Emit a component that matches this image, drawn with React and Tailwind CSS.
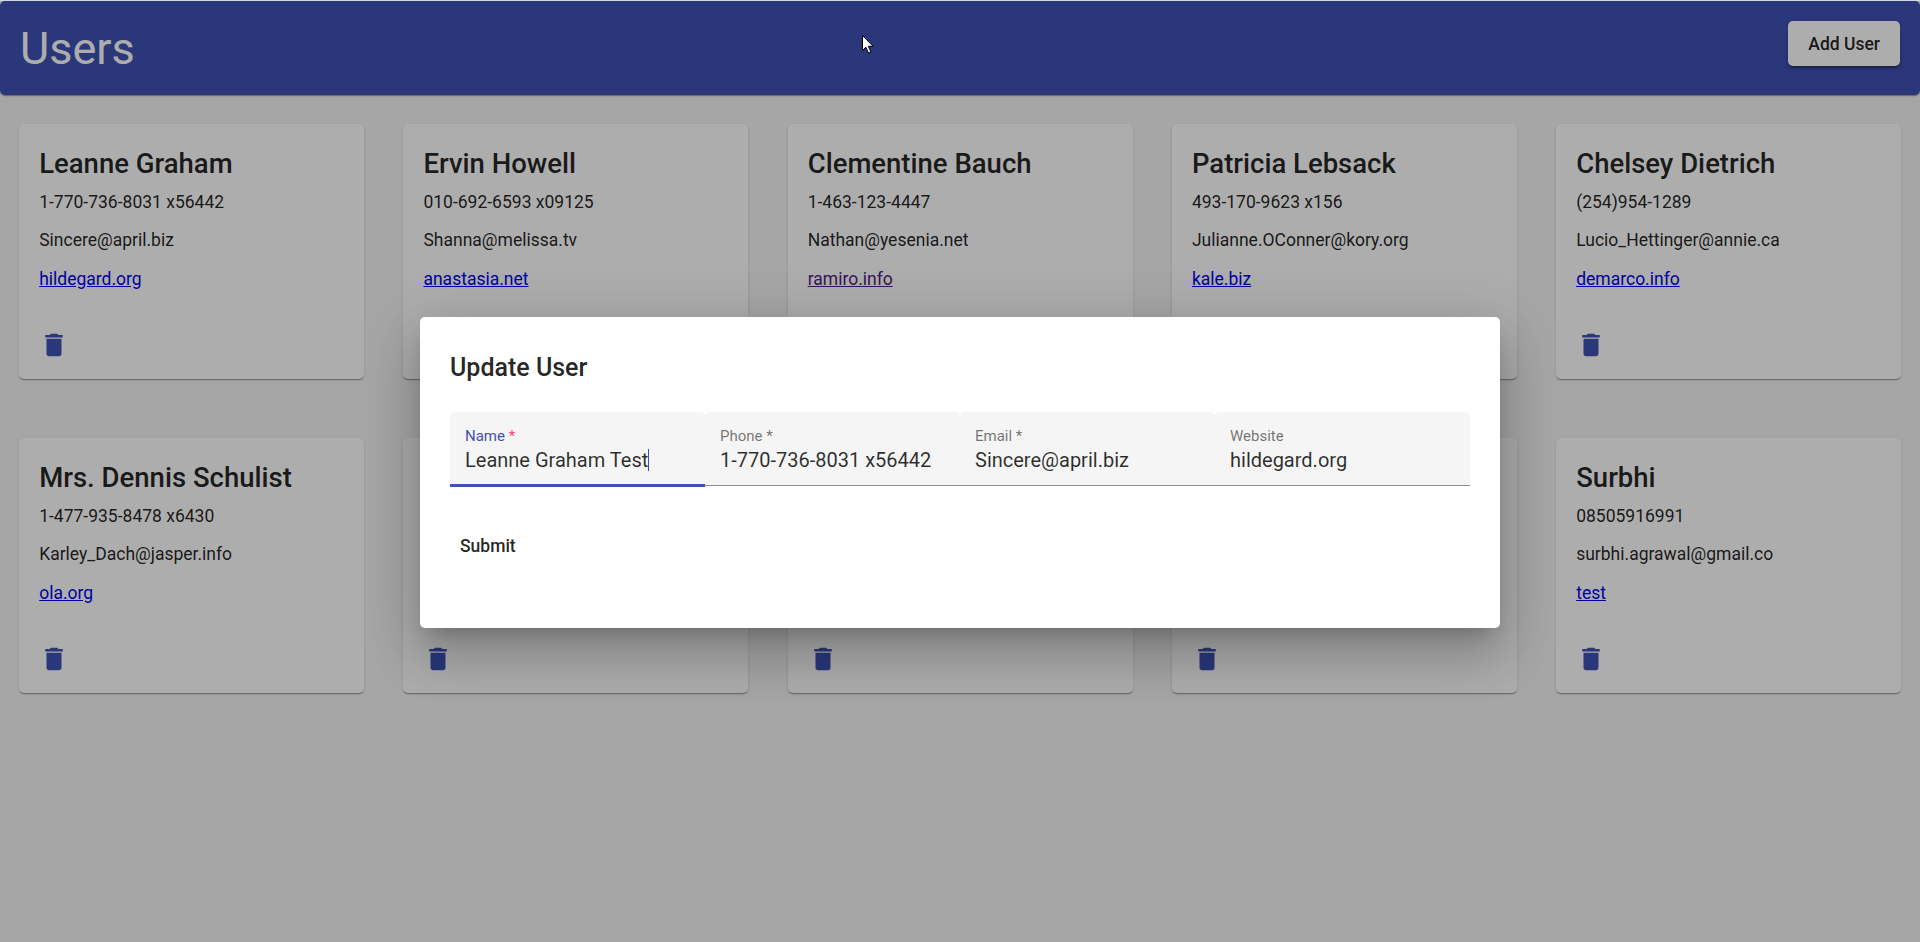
const users = [
  { name: "Leanne Graham", phone: "1-770-736-8031 x56442", email: "Sincere@april.biz", website: "hildegard.org" },
  { name: "Ervin Howell", phone: "010-692-6593 x09125", email: "Shanna@melissa.tv", website: "anastasia.net" },
  { name: "Clementine Bauch", phone: "1-463-123-4447", email: "Nathan@yesenia.net", website: "ramiro.info", visited: true },
  { name: "Patricia Lebsack", phone: "493-170-9623 x156", email: "Julianne.OConner@kory.org", website: "kale.biz" },
  { name: "Chelsey Dietrich", phone: "(254)954-1289", email: "Lucio_Hettinger@annie.ca", website: "demarco.info" },
  { name: "Mrs. Dennis Schulist", phone: "1-477-935-8478 x6430", email: "Karley_Dach@jasper.info", website: "ola.org" },
  {},
  {},
  {},
  { name: "Surbhi", phone: "08505916991", email: "surbhi.agrawal@gmail.co", website: "test" },
];

const fields = [
  { label: "Name", value: "Leanne Graham Test", required: true, focused: true },
  { label: "Phone", value: "1-770-736-8031 x56442", required: true },
  { label: "Email", value: "Sincere@april.biz", required: true },
  { label: "Website", value: "hildegard.org" },
];

function DeleteIcon() {
  return (
    <svg className="size-[30px] fill-[#3f51b5]" viewBox="0 0 24 24">
      <path d="M6 19c0 1.1.9 2 2 2h8c1.1 0 2-.9 2-2V7H6v12zM19 4h-3.5l-1-1h-5l-1 1H5v2h14V4z" />
    </svg>
  );
}

function UserCard({ user }) {
  return (
    <article className="flex h-[255px] flex-col rounded-[5px] bg-white px-5 pt-[21px] pb-[19px] text-[17.5px] leading-[38px] text-black/87 shadow-[0_2px_1px_-1px_rgba(0,0,0,0.2),0_1px_1px_0_rgba(0,0,0,0.14),0_1px_3px_0_rgba(0,0,0,0.12)]">
      {user.name && (
        <>
          <h2 className="text-[27.5px] leading-[38px] font-medium">{user.name}</h2>
          <p>{user.phone}</p>
          <p>{user.email}</p>
          <p className="mt-px">
            <a className={user.visited ? "text-[#551a8b] underline" : "text-[#0000ee] underline"}>{user.website}</a>
          </p>
        </>
      )}
      <button className="mt-auto self-start" aria-label="Delete">
        <DeleteIcon />
      </button>
    </article>
  );
}

function Field({ field }) {
  return (
    <label className={`flex w-[255px] flex-col rounded-t-[5px] bg-[#f5f5f5] px-[15px] pt-[14px] ${field.focused ? "h-[75px] border-b-3 border-[#3f51b5]" : "h-[74px] border-b border-[#8e8e8e]"}`}>
      <span className={`text-[15px] leading-5 ${field.focused ? "text-[#3f51b5]" : "text-black/55"}`}>
        {field.label}
        {field.required && <span className={field.focused ? "text-[#ff4081]" : ""}> *</span>}
      </span>
      <span className="flex items-center text-[20px] leading-7 whitespace-nowrap text-black/82">
        {field.value}
        {field.focused && <span className="h-[22px] w-px bg-[#3f51b5]" />}
      </span>
    </label>
  );
}

export default function App() {
  return (
    <div className="relative h-[942px] w-[1920px] overflow-hidden border-t border-[#d5d9dd] bg-[#f5f5f5] font-['Roboto',sans-serif]">
      <header className="flex h-[94px] items-start justify-between rounded-[5px] bg-[#3f51b5] p-5 shadow-[0_2px_1px_-1px_rgba(0,0,0,0.2),0_1px_1px_0_rgba(0,0,0,0.14),0_1px_3px_0_rgba(0,0,0,0.12)]">
        <h1 className="text-[45px] leading-[56px] text-white">Users</h1>
        <button className="h-[45px] rounded-[5px] bg-white px-5 pt-0.5 text-[17.5px] font-medium text-black/87 shadow-[0_3.75px_1.25px_-2.5px_rgba(0,0,0,0.2),0_2.5px_2.5px_0_rgba(0,0,0,0.14),0_1.25px_6.25px_0_rgba(0,0,0,0.12)]">
          Add User
        </button>
      </header>
      <main className="grid grid-cols-[repeat(5,345px)] gap-x-[39.25px] gap-y-[59px] px-[19.2px] pt-[29px]">
        {users.map((user, i) => (
          <UserCard key={i} user={user} />
        ))}
      </main>

      <div className="absolute inset-0 flex items-start justify-center bg-black/32 pt-[316px]">
        <section className="h-[311px] w-[1080px] rounded-[5px] bg-white p-[30px] shadow-[0_13.75px_18.75px_-8.75px_rgba(0,0,0,0.2),0_30px_47.5px_3.75px_rgba(0,0,0,0.14),0_11.25px_57.5px_10px_rgba(0,0,0,0.12)]">
          <h2 className="text-[25px] leading-[42px] font-medium text-black/87">Update User</h2>
          <form className="mt-[23px] flex h-[75px] items-start">
            {fields.map((field) => (
              <Field key={field.label} field={field} />
            ))}
          </form>
          <button className="mt-[37px] h-[45px] px-[10px] text-[17.5px] font-medium text-black/87">Submit</button>
        </section>
      </div>

      <svg className="absolute top-[33px] left-[861px] h-[21px] w-[14px]" viewBox="0 0 14 21">
        <path d="M1.5 1.5v15l3.4-3.3 2.6 5.9 2.4-1-2.5-5.8h4.7z" fill="#fff" stroke="#000" />
      </svg>
    </div>
  );
}
